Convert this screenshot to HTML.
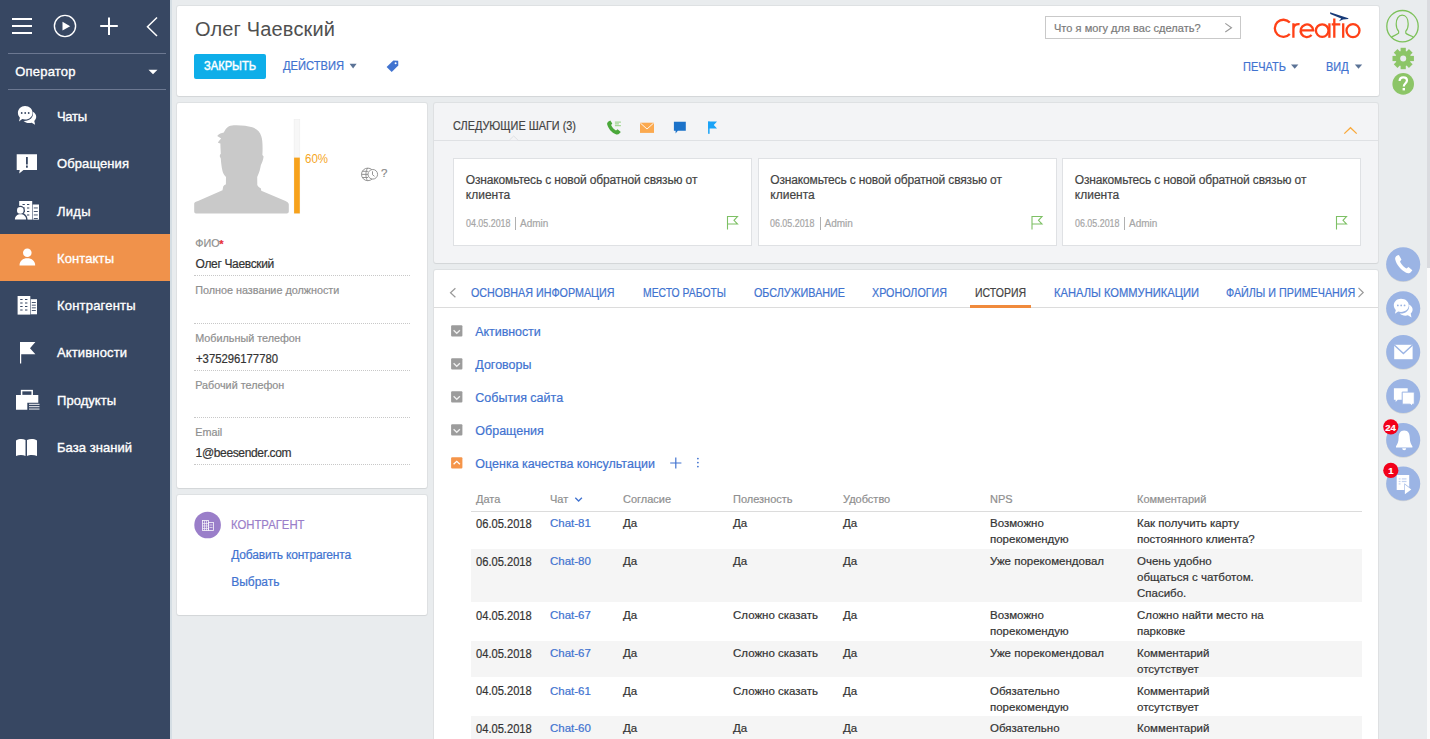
<!DOCTYPE html>
<html><head><meta charset="utf-8"><style>
html,body{margin:0;padding:0;width:1430px;height:739px;overflow:hidden;background:#e9ecee;font-family:"Liberation Sans",sans-serif;}
div{white-space:nowrap;-webkit-text-stroke:0.2px currentColor}
</style></head><body>
<div style="position:absolute;left:0px;top:0px;width:170px;height:739px;background:#374762;"></div><div style="position:absolute;left:170px;top:0px;width:1.5px;height:739px;background:#d5dee4;"></div><div style="position:absolute;left:8px;top:53px;width:158px;height:1px;background:#6c7891;"></div><div style="position:absolute;left:8px;top:89px;width:158px;height:1px;background:#6c7891;"></div><div style="position:absolute;left:0px;top:234px;width:170px;height:47px;background:#f0924b;"></div><div style="position:absolute;left:177px;top:6px;width:1202px;height:90px;background:#fff;box-shadow:0 0 0 1px rgba(0,0,0,0.045), 0 1px 1px rgba(0,0,0,0.05);border-radius:2px"></div><div style="position:absolute;left:177px;top:103px;width:250px;height:385px;background:#fff;box-shadow:0 0 0 1px rgba(0,0,0,0.045), 0 1px 1px rgba(0,0,0,0.05);border-radius:2px"></div><div style="position:absolute;left:177px;top:495px;width:250px;height:120px;background:#fff;box-shadow:0 0 0 1px rgba(0,0,0,0.045), 0 1px 1px rgba(0,0,0,0.05);border-radius:2px"></div><div style="position:absolute;left:434px;top:103px;width:944px;height:160px;background:#f3f4f6;box-shadow:0 0 0 1px rgba(0,0,0,0.045), 0 1px 1px rgba(0,0,0,0.05);border-radius:2px"></div><div style="position:absolute;left:434px;top:270px;width:944px;height:480px;background:#fff;box-shadow:0 0 0 1px rgba(0,0,0,0.045), 0 1px 1px rgba(0,0,0,0.05);border-radius:2px"></div><div style="position:absolute;left:1427px;top:0px;width:3px;height:268px;background:#dadbdf;"></div><div style="position:absolute;left:1427px;top:268px;width:3px;height:471px;background:#fbfbfb;"></div><div style="position:absolute;left:194px;top:54px;width:72px;height:25px;background:#0eaee9;border-radius:2px"></div><div style="position:absolute;left:1044.5px;top:16px;width:196px;height:23px;background:#fff;box-sizing:border-box;border:1px solid #c9c9c9"></div><div style="position:absolute;left:194px;top:275.0px;width:216px;height:0;border-top:1px dotted #c8c8c8"></div><div style="position:absolute;left:194px;top:322.5px;width:216px;height:0;border-top:1px dotted #c8c8c8"></div><div style="position:absolute;left:194px;top:369.7px;width:216px;height:0;border-top:1px dotted #c8c8c8"></div><div style="position:absolute;left:194px;top:416.9px;width:216px;height:0;border-top:1px dotted #c8c8c8"></div><div style="position:absolute;left:194px;top:464.1px;width:216px;height:0;border-top:1px dotted #c8c8c8"></div><div style="position:absolute;left:434px;top:139.5px;width:944px;height:1px;background:#dfe1e4;"></div><div style="position:absolute;left:453px;top:158px;width:299px;height:87.5px;background:#fff;box-sizing:border-box;border:1px solid #dfe1e4"></div><div style="position:absolute;left:515px;top:216.5px;width:1px;height:13.5px;background:#b0b0b0;"></div><div style="position:absolute;left:757.5px;top:158px;width:299px;height:87.5px;background:#fff;box-sizing:border-box;border:1px solid #dfe1e4"></div><div style="position:absolute;left:819.5px;top:216.5px;width:1px;height:13.5px;background:#b0b0b0;"></div><div style="position:absolute;left:1062px;top:158px;width:299px;height:87.5px;background:#fff;box-sizing:border-box;border:1px solid #dfe1e4"></div><div style="position:absolute;left:1124px;top:216.5px;width:1px;height:13.5px;background:#b0b0b0;"></div><div style="position:absolute;left:434px;top:307px;width:944px;height:1px;background:#dcdcdc;"></div><div style="position:absolute;left:969.6px;top:305px;width:61.6px;height:3px;background:#f08a3c;"></div><div style="position:absolute;left:471px;top:510.5px;width:891px;height:1.5px;background:#dcdcdc;"></div><div style="position:absolute;left:471px;top:549.3px;width:891px;height:53.0px;background:#f5f5f5;"></div><div style="position:absolute;left:471px;top:640.5px;width:891px;height:36.700000000000045px;background:#f5f5f5;"></div><div style="position:absolute;left:471px;top:716.2px;width:891px;height:43.799999999999955px;background:#f5f5f5;"></div>
<svg width="1430" height="739" style="position:absolute;left:0;top:0"><rect x="12" y="18" width="20" height="2" fill="#fff"/><rect x="12" y="25" width="20" height="2" fill="#fff"/><rect x="12" y="32" width="20" height="2" fill="#fff"/><circle cx="65" cy="26" r="10.6" fill="none" stroke="#fff" stroke-width="1.4"/><path d="M62.5 21.8 L70.2 26.2 L62.5 30.6 Z" fill="#fff"/><rect x="100.2" y="25" width="17.6" height="2" fill="#fff"/><rect x="108" y="17.5" width="2" height="17.5" fill="#fff"/><path d="M157 17.5 L147.5 26.7 L157 36" fill="none" stroke="#fff" stroke-width="1.5"/><path d="M148.5 69.7 L157.5 69.7 L153 74.3 Z" fill="#fff"/><path d="M25 106 C29.5 106 32.6 109 32.6 112.8 C32.6 116.6 29.5 119.6 25 119.6 C24 119.6 23 119.4 22.2 119.1 L19 121.5 L19.9 117.7 C18.7 116.4 17.9 114.7 17.9 112.8 C17.9 109 21 106 25 106 Z" fill="#fff"/><path d="M32.9 111.8 C35 113 36.2 114.8 36.2 116.8 C36.2 118.4 35.4 119.9 34.3 121 L35.1 124.8 L31.6 122.8 C30.8 123 30 123.1 29.1 123.1 C26.8 123.1 24.9 122.3 23.6 121 C29.5 121.3 34 117.4 32.9 111.8 Z" fill="#fff"/><circle cx="21.7" cy="113" r="0.9" fill="#374762"/><circle cx="25.2" cy="113" r="0.9" fill="#374762"/><circle cx="28.7" cy="113" r="0.9" fill="#374762"/><path d="M16.7 154.2 H37 V170.1 H23.5 L19.2 173.6 L19.7 170.1 H16.7 Z" fill="#fff"/><rect x="26" y="157" width="1.8" height="7.5" fill="#374762"/><rect x="26" y="165.5" width="1.8" height="2.2" fill="#374762"/><rect x="19.2" y="201" width="13" height="18.6" fill="#fff"/><rect x="32.7" y="204.5" width="6.3" height="15.1" fill="#fff"/><rect x="22.5" y="204" width="2.3" height="1" fill="#374762"/><rect x="27" y="204" width="2.3" height="1" fill="#374762"/><rect x="22.5" y="207.5" width="2.3" height="1" fill="#374762"/><rect x="27" y="207.5" width="2.3" height="1" fill="#374762"/><rect x="22.5" y="211" width="2.3" height="1" fill="#374762"/><rect x="27" y="211" width="2.3" height="1" fill="#374762"/><rect x="22.5" y="214.5" width="2.3" height="1" fill="#374762"/><rect x="27" y="214.5" width="2.3" height="1" fill="#374762"/><rect x="33.8" y="207.5" width="4" height="0.9" fill="#374762"/><rect x="33.8" y="211" width="4" height="0.9" fill="#374762"/><rect x="33.8" y="214.5" width="4" height="0.9" fill="#374762"/><rect x="33.8" y="218" width="4" height="0.9" fill="#374762"/><circle cx="20.3" cy="210.4" r="4.6" fill="#374762"/><path d="M13.4 220.5 C13.4 215.3 16.5 212.8 20.5 212.8 C24.5 212.8 27.6 215.3 27.6 220.5 Z" fill="#374762"/><circle cx="20.3" cy="210.4" r="3.3" fill="#fff"/><path d="M14.9 219.6 C14.9 216.2 17.3 214.2 20.5 214.2 C23.7 214.2 26.1 216.2 26.1 219.6 Z" fill="#fff"/><circle cx="27.3" cy="252.8" r="4.3" fill="#fff"/><path d="M19.5 265.4 C19.5 261 22.8 258.3 27.3 258.3 C31.8 258.3 35.2 261 35.2 265.4 Z" fill="#fff"/><rect x="17.6" y="296" width="12.7" height="18.6" fill="#fff"/><rect x="30.8" y="299.2" width="6.2" height="15.1" fill="#fff"/><rect x="20.2" y="299" width="2.4" height="1" fill="#374762"/><rect x="25" y="299" width="2.4" height="1" fill="#374762"/><rect x="20.2" y="302.5" width="2.4" height="1" fill="#374762"/><rect x="25" y="302.5" width="2.4" height="1" fill="#374762"/><rect x="20.2" y="306" width="2.4" height="1" fill="#374762"/><rect x="25" y="306" width="2.4" height="1" fill="#374762"/><rect x="20.2" y="309.5" width="2.4" height="1" fill="#374762"/><rect x="25" y="309.5" width="2.4" height="1" fill="#374762"/><rect x="31.8" y="302" width="4" height="0.9" fill="#374762"/><rect x="31.8" y="304.7" width="4" height="0.9" fill="#374762"/><rect x="31.8" y="307.4" width="4" height="0.9" fill="#374762"/><rect x="31.8" y="310.1" width="4" height="0.9" fill="#374762"/><rect x="20" y="342" width="1.2" height="21.5" fill="#fff"/><path d="M20 342 H35.4 L30 348.3 L35.4 354.3 H20 Z" fill="#fff"/><rect x="21.6" y="390.6" width="10.6" height="5" fill="none" stroke="#fff" stroke-width="1.5"/><path d="M16 395 H38.3 V402.7 H27.3 V409.7 H16 Z" fill="#fff"/><rect x="29" y="403.8" width="10.5" height="1.1" fill="#fff" opacity="0.85"/><rect x="29" y="406.1" width="10.5" height="1.1" fill="#fff" opacity="0.85"/><rect x="29" y="408.5" width="10.5" height="1.1" fill="#fff" opacity="0.85"/><path d="M16 440.5 C19 438.6 23 438.6 25.5 440 V456 C23 454.8 19 454.8 16 456 Z" fill="#fff"/><path d="M37 440.5 C34 438.6 30 438.6 27 440 V456 C29.5 454.8 34 454.8 37 456 Z" fill="#fff"/><path d="M349.6 63.8 H356.6 L353.1 68.5 Z" fill="#5b7396"/><path d="M1291 64.4 H1298.4 L1294.7 68.7 Z" fill="#5b7396"/><path d="M1354.8 64.4 H1362.2 L1358.5 68.7 Z" fill="#5b7396"/><path d="M386.6 67 L393.3 60.6 L398.2 60.8 L398.3 65.6 L391.7 72 Z" fill="#4173d0"/><circle cx="395.6" cy="63.3" r="1" fill="#fff"/><path d="M1225.3 23.4 L1231.5 27.7 L1225.3 32" fill="none" stroke="#999" stroke-width="1.1"/><g fill="none" stroke="#ff4117" stroke-width="2.3"><path d="M1289.8 22.6 A8.6 8.6 0 1 0 1289.8 34.1"/><path d="M1293.4 23.3 V37.8 M1293.4 29 C1293.6 25 1296 23.8 1299.6 24.1"/><path d="M1300.8 30.4 H1313.2 A6.3 6.3 0 1 0 1311.6 35"/><circle cx="1322.2" cy="30.6" r="6.3"/><path d="M1329.4 23.3 V37.8"/><path d="M1334.3 18.5 V37.8 M1331.7 24.4 H1340.3"/><path d="M1343.2 23.3 V37.8"/><circle cx="1353" cy="30.6" r="6.5"/></g><path d="M1330 12.2 L1348.4 18.2 L1348.2 19 L1343 19.4 L1339 21.3 L1341.2 18.6 L1330.3 13.9 Z" fill="#163a78"/><circle cx="1402.5" cy="26.2" r="15.7" fill="none" stroke="#7dc15a" stroke-width="1.3"/><path d="M1391.5 37 C1393.5 35.5 1397.5 34.8 1398.6 33.2 V31.2 C1397 29.6 1396.2 27.2 1396.2 24 C1396.2 18.6 1398.6 15.2 1402.2 15.2 C1405.8 15.2 1408.2 18.6 1408.2 24 C1408.2 27.2 1407.4 29.6 1405.8 31.2 V33.2 C1406.9 34.8 1411 35.5 1413.2 37" fill="none" stroke="#7dc15a" stroke-width="1.2"/><g fill="#8cc567"><circle cx="1403.2" cy="58.5" r="7.8"/><rect x="1400.6000000000001" y="47.8" width="5.2" height="5" transform="rotate(0 1403.2 58.5)"/><rect x="1400.6000000000001" y="47.8" width="5.2" height="5" transform="rotate(45 1403.2 58.5)"/><rect x="1400.6000000000001" y="47.8" width="5.2" height="5" transform="rotate(90 1403.2 58.5)"/><rect x="1400.6000000000001" y="47.8" width="5.2" height="5" transform="rotate(135 1403.2 58.5)"/><rect x="1400.6000000000001" y="47.8" width="5.2" height="5" transform="rotate(180 1403.2 58.5)"/><rect x="1400.6000000000001" y="47.8" width="5.2" height="5" transform="rotate(225 1403.2 58.5)"/><rect x="1400.6000000000001" y="47.8" width="5.2" height="5" transform="rotate(270 1403.2 58.5)"/><rect x="1400.6000000000001" y="47.8" width="5.2" height="5" transform="rotate(315 1403.2 58.5)"/></g><circle cx="1403.2" cy="58.5" r="3" fill="#e9ecee"/><circle cx="1403.2" cy="83.9" r="10.8" fill="#8cc567"/><path d="M1399.6 81 C1399.6 78.6 1401.2 77.3 1403.3 77.3 C1405.4 77.3 1407 78.6 1407 80.6 C1407 83.2 1403.8 83.4 1403.8 86.5" fill="none" stroke="#fff" stroke-width="2.2"/><rect x="1402.6" y="88" width="2.4" height="2.4" fill="#fff"/><circle cx="1403.2" cy="265.0" r="17" fill="#000" opacity="0.10"/><circle cx="1403.2" cy="264.3" r="17" fill="#9bb4e4"/><circle cx="1403.2" cy="308.9" r="17" fill="#000" opacity="0.10"/><circle cx="1403.2" cy="308.2" r="17" fill="#9bb4e4"/><circle cx="1403.2" cy="352.7" r="17" fill="#000" opacity="0.10"/><circle cx="1403.2" cy="352" r="17" fill="#9bb4e4"/><circle cx="1403.2" cy="396.7" r="17" fill="#000" opacity="0.10"/><circle cx="1403.2" cy="396" r="17" fill="#9bb4e4"/><circle cx="1403.2" cy="440.7" r="17" fill="#000" opacity="0.10"/><circle cx="1403.2" cy="440" r="17" fill="#9bb4e4"/><circle cx="1403.2" cy="484.2" r="17" fill="#000" opacity="0.10"/><circle cx="1403.2" cy="483.5" r="17" fill="#9bb4e4"/><path d="M1397.3 256.5 C1396 257.2 1395.3 258.4 1395.7 260 C1396.8 264.5 1400.5 269 1405 271.2 C1406.6 272 1408.2 271.6 1409.3 270.3 L1410.3 269 L1407 266.3 L1405.4 267.6 C1403.2 266.6 1400.6 263.6 1399.8 261.5 L1401 259.9 L1398.8 256 Z" fill="#fff" transform="translate(1403.2 264.3) scale(1.17) translate(-1402.5 -264)"/><g transform="translate(1403.2 308.2) scale(1.12) translate(-1403 -308)"><path d="M1401 299.5 C1405.2 299.5 1408 302.1 1408 305.4 C1408 308.7 1405.2 311.3 1401 311.3 C1400.1 311.3 1399.3 311.1 1398.5 310.9 L1395.6 313 L1396.4 309.6 C1395.3 308.5 1394.6 307 1394.6 305.4 C1394.6 302.1 1397.3 299.5 1401 299.5 Z" fill="#fff"/><path d="M1408.2 304.6 C1410.2 305.7 1411.4 307.3 1411.4 309.1 C1411.4 310.5 1410.7 311.8 1409.7 312.8 L1410.4 316.3 L1407.2 314.4 C1406.5 314.6 1405.8 314.7 1405 314.7 C1402.9 314.7 1401.2 314 1400 312.8 C1405.5 313 1409.2 309.5 1408.2 304.6 Z" fill="#fff"/><circle cx="1398.2" cy="305.5" r="0.8" fill="#9bb4e4"/><circle cx="1401.2" cy="305.5" r="0.8" fill="#9bb4e4"/><circle cx="1404.2" cy="305.5" r="0.8" fill="#9bb4e4"/></g><rect x="1394.2" y="344.8" width="18.4" height="14.4" fill="#fff"/><path d="M1394.2 345 L1403.4 353.6 L1412.6 345" fill="none" stroke="#9bb4e4" stroke-width="1.4"/><path d="M1393.9 388.2 H1407.7 V399.7 H1397.8 L1395.6 402 V399.7 H1393.9 Z" fill="#fff"/><path d="M1402.2 392.1 H1414.3 V404.2 H1412.4 V406.4 L1410.3 404.2 H1402.2 Z" fill="#fff" stroke="#9bb4e4" stroke-width="1"/><path d="M1404.2 430.5 C1400 430.5 1398.6 434 1398.6 438 C1398.6 442 1397.2 444.5 1396 446.3 V447.4 H1412.4 V446.3 C1411.2 444.5 1409.8 442 1409.8 438 C1409.8 434 1408.4 430.5 1404.2 430.5 Z" fill="#fff"/><path d="M1402.2 448.3 A2 2 0 0 0 1406.2 448.3 Z" fill="#fff"/><rect x="1396.7" y="475" width="12.5" height="15" fill="#fff"/><rect x="1398.7" y="478.29999999999995" width="1.8" height="1.2" fill="#9bb4e4" opacity="0.6"/><rect x="1401.8" y="478.29999999999995" width="4.7" height="1.2" fill="#9bb4e4" opacity="0.6"/><rect x="1398.7" y="480.9" width="1.8" height="1.2" fill="#9bb4e4" opacity="0.6"/><rect x="1401.8" y="480.9" width="4.7" height="1.2" fill="#9bb4e4" opacity="0.6"/><rect x="1398.7" y="483.29999999999995" width="1.8" height="1.2" fill="#9bb4e4" opacity="0.6"/><path d="M1404.3 483.3 L1412.4 489.4 L1404.3 495.5 Z" fill="#9bb4e4"/><path d="M1404.9 484.6 L1411.3 489.4 L1404.9 494.3 Z" fill="#fff"/><circle cx="1390.8" cy="426.8" r="7.6" fill="#f2001a"/><circle cx="1390.8" cy="470.4" r="7.6" fill="#f2001a"/><path d="M233.7 125.3 C241 125 247 125.8 252.3 127.3 C257 129 260 132 261.2 136 C262.6 140 262.8 146 262.4 155 L263.6 156.5 C263.2 160 262 163 260.9 165 C260.2 169 259.5 172 257.2 177 L257.3 185 C257.8 186.6 259.6 187.5 260.8 188.2 L261.3 190.8 L285.5 200.9 C287.5 201.8 288.8 203 288.8 204.6 V211.5 C288.8 212.7 287.9 213.5 286.8 213.5 H196 C195 213.5 194.2 212.7 194.2 211.5 V203.5 C194.2 202.2 196 201.4 198 200.9 L222.5 190.3 L223.2 186.4 C224 185.3 225 184.8 225.9 184.3 L226 177 C224 175 223 173 222.5 171 C221.6 167 221 162 220.8 158.4 L219.8 156.6 C219.8 155 220.2 154.2 220.8 153.8 C220.6 149 220.4 146 220.4 143.4 L217.9 142.8 C218.8 141 219.8 139.8 221.2 138.6 C220 137.6 218.6 136.6 217.2 135.9 C219 134 221.4 133 223.8 132.6 C224.8 130.2 226 128.4 227.6 127.2 C229.4 126 231.5 125.4 233.7 125.3 Z" fill="#c9c9c9"/><rect x="294.1" y="119.4" width="5.7" height="94" fill="#f7f7f7" stroke="#eeeeee" stroke-width="0.6"/><rect x="294.1" y="157.6" width="5.7" height="55.8" fill="#f7a21c"/><g fill="none" stroke="#8a8a8a" stroke-width="0.9"><circle cx="367.8" cy="174.4" r="6.3"/><path d="M367.8 168.1 C365.3 170 365.3 179 367.8 180.7 M361.5 174.4 H369 M362.3 171.3 H368 M362.3 177.5 H368"/><circle cx="372.8" cy="174.3" r="4.8" fill="#fff"/><path d="M372.5 171.3 V174.7 L374.5 176.3"/></g><circle cx="207.6" cy="525" r="13.3" fill="#9a7ec9"/><g fill="none" stroke="#fff" stroke-width="0.8" opacity="0.95"><rect x="202.5" y="520.5" width="6" height="10"/><rect x="208.5" y="522.5" width="5" height="8"/><path d="M204.5 520.5 V530.5 M206.5 520.5 V530.5 M202.5 523.5 H208.5 M202.5 526 H208.5 M202.5 528.5 H208.5 M209.5 525 H212.5 M209.5 527.5 H212.5" opacity="0.8"/></g><path d="M609 121.2 C607.6 121.9 606.8 123.1 607.2 124.6 C608.3 128.9 611.8 132.8 615.8 134.3 C617.2 134.8 618.6 134.4 619.6 133.3 L620.8 132 L617.6 129.2 L616 130.4 C614.2 129.5 611.8 126.9 611.1 124.9 L612.3 123.4 L610.3 120.4 Z" fill="#4aa83a"/><g fill="#8fd07c"><rect x="614.9" y="121.6" width="6" height="1"/><rect x="614.9" y="123.4" width="4" height="1"/><rect x="614.9" y="125.2" width="6" height="1"/></g><rect x="640" y="122.7" width="14" height="10.2" fill="#fba94f"/><path d="M640.3 123 L647 129 L653.7 123" fill="none" stroke="#fff" stroke-width="0.9"/><path d="M673.9 121.8 H685.8 V130.7 H677.8 L675.6 133.4 V130.7 H673.9 Z" fill="#1b72c9"/><rect x="708.1" y="121.6" width="1.5" height="12.2" fill="#1aa3f7"/><path d="M708.1 121.6 H717 L713.8 125 L717 128.5 H708.1 Z" fill="#1aa3f7"/><path d="M1344.3 133.6 L1350.5 127.7 L1356.7 133.6" fill="none" stroke="#f9a93b" stroke-width="1.3"/><path d="M509.5 140.3 L513.7 136.2 L517.9 140.3 Z" fill="#f3f4f6"/><path d="M509.5 140 L513.7 136 L517.9 140" fill="none" stroke="#dfe1e4" stroke-width="1"/><path d="M727.5 229.4 V216.5 H737.5 L734 220.3 L737.5 224 H727.5" fill="none" stroke="#7dc064" stroke-width="1.1"/><path d="M1032.0 229.4 V216.5 H1042.0 L1038.5 220.3 L1042.0 224 H1032.0" fill="none" stroke="#7dc064" stroke-width="1.1"/><path d="M1336.5 229.4 V216.5 H1346.5 L1343 220.3 L1346.5 224 H1336.5" fill="none" stroke="#7dc064" stroke-width="1.1"/><path d="M455.4 288.3 L450.5 292.8 L455.4 297.3" fill="none" stroke="#999" stroke-width="1.2"/><path d="M1358.5 287.8 L1363.2 292.5 L1358.5 297.2" fill="none" stroke="#999" stroke-width="1.2"/><rect x="451.1" y="325.3" width="11.3" height="11.3" rx="1" fill="#9c9c9c"/><path d="M453.6 330.3 L456.75 333.3 L459.9 330.3" fill="none" stroke="#f0f0f0" stroke-width="1.3"/><rect x="451.1" y="358.3" width="11.3" height="11.3" rx="1" fill="#9c9c9c"/><path d="M453.6 363.3 L456.75 366.3 L459.9 363.3" fill="none" stroke="#f0f0f0" stroke-width="1.3"/><rect x="451.1" y="391.3" width="11.3" height="11.3" rx="1" fill="#9c9c9c"/><path d="M453.6 396.3 L456.75 399.3 L459.9 396.3" fill="none" stroke="#f0f0f0" stroke-width="1.3"/><rect x="451.1" y="424.3" width="11.3" height="11.3" rx="1" fill="#9c9c9c"/><path d="M453.6 429.3 L456.75 432.3 L459.9 429.3" fill="none" stroke="#f0f0f0" stroke-width="1.3"/><rect x="451.1" y="457.3" width="11.3" height="11.3" rx="1" fill="#f5954a"/><path d="M453.6 464.3 L456.75 461.3 L459.9 464.3" fill="none" stroke="#fff" stroke-width="1.3"/><path d="M670.2 463 H681.4 M675.8 457.4 V468.6" stroke="#4173d0" stroke-width="1.2"/><g fill="#4173d0"><circle cx="697.9" cy="458.6" r="0.9"/><circle cx="697.9" cy="462.6" r="0.9"/><circle cx="697.9" cy="466.6" r="0.9"/></g><path d="M575.3 497.8 L578.6 501 L581.9 497.8" fill="none" stroke="#4173d0" stroke-width="1.3"/></svg>
<div id="t0" style="position:absolute;left:15.2px;top:64.00px;font-size:13px;line-height:15.60px;font-weight:400;color:#fff;letter-spacing:0.210px;-webkit-text-stroke:0.35px #fff">Оператор</div><div id="t1" style="position:absolute;left:57.0px;top:109.10px;font-size:13px;line-height:15.60px;font-weight:400;color:#fff;letter-spacing:-0.307px;-webkit-text-stroke:0.35px #fff">Чаты</div><div id="t2" style="position:absolute;left:57.0px;top:156.35px;font-size:13px;line-height:15.60px;font-weight:400;color:#fff;letter-spacing:0.090px;-webkit-text-stroke:0.35px #fff">Обращения</div><div id="t3" style="position:absolute;left:57.0px;top:203.60px;font-size:13px;line-height:15.60px;font-weight:400;color:#fff;letter-spacing:0.255px;-webkit-text-stroke:0.35px #fff">Лиды</div><div id="t4" style="position:absolute;left:57.0px;top:250.85px;font-size:13px;line-height:15.60px;font-weight:400;color:#fff;letter-spacing:0.121px;-webkit-text-stroke:0.35px #fff">Контакты</div><div id="t5" style="position:absolute;left:57.0px;top:298.10px;font-size:13px;line-height:15.60px;font-weight:400;color:#fff;letter-spacing:0.194px;-webkit-text-stroke:0.35px #fff">Контрагенты</div><div id="t6" style="position:absolute;left:57.0px;top:345.35px;font-size:13px;line-height:15.60px;font-weight:400;color:#fff;letter-spacing:0.137px;-webkit-text-stroke:0.35px #fff">Активности</div><div id="t7" style="position:absolute;left:57.0px;top:392.60px;font-size:13px;line-height:15.60px;font-weight:400;color:#fff;letter-spacing:0.036px;-webkit-text-stroke:0.35px #fff">Продукты</div><div id="t8" style="position:absolute;left:57.0px;top:439.85px;font-size:13px;line-height:15.60px;font-weight:400;color:#fff;letter-spacing:0.050px;-webkit-text-stroke:0.35px #fff">База знаний</div><div id="t9" style="position:absolute;left:195.0px;top:16.97px;font-size:20px;line-height:24.00px;font-weight:400;color:#505050;letter-spacing:0.163px;-webkit-text-stroke:0">Олег Чаевский</div><div id="t10" style="position:absolute;left:204.2px;top:59.14px;font-size:12px;line-height:14.40px;font-weight:400;color:#fff;transform:scaleX(0.9273);transform-origin:0 0;-webkit-text-stroke:0.45px #fff">ЗАКРЫТЬ</div><div id="t11" style="position:absolute;left:283.2px;top:59.14px;font-size:12px;line-height:14.40px;font-weight:400;color:#4173d0;transform:scaleX(0.9291);transform-origin:0 0;">ДЕЙСТВИЯ</div><div id="t12" style="position:absolute;left:1242.6px;top:59.54px;font-size:12px;line-height:14.40px;font-weight:400;color:#4173d0;transform:scaleX(0.9167);transform-origin:0 0;">ПЕЧАТЬ</div><div id="t13" style="position:absolute;left:1326.2px;top:59.54px;font-size:12px;line-height:14.40px;font-weight:400;color:#4173d0;transform:scaleX(0.9126);transform-origin:0 0;">ВИД</div><div id="t14" style="position:absolute;left:1054.0px;top:22.39px;font-size:11px;line-height:13.20px;font-weight:400;color:#7a7a7a;letter-spacing:0.035px;">Что я могу для вас сделать?</div><div id="t15" style="position:absolute;left:304.7px;top:151.94px;font-size:12px;line-height:14.40px;font-weight:400;color:#f5a623;transform:scaleX(0.9571);transform-origin:0 0;-webkit-text-stroke:0">60%</div><div id="t16" style="position:absolute;left:195.2px;top:236.98px;font-size:10.8px;line-height:12.96px;font-weight:400;color:#8f8f8f;">ФИО</div><div id="t17" style="position:absolute;left:195.6px;top:256.84px;font-size:12px;line-height:14.40px;font-weight:400;color:#333;letter-spacing:-0.344px;">Олег Чаевский</div><div id="t18" style="position:absolute;left:195.2px;top:284.48px;font-size:10.8px;line-height:12.96px;font-weight:400;color:#8f8f8f;">Полное название должности</div><div id="t19" style="position:absolute;left:195.2px;top:331.68px;font-size:10.8px;line-height:12.96px;font-weight:400;color:#8f8f8f;">Мобильный телефон</div><div id="t20" style="position:absolute;left:195.6px;top:351.54px;font-size:12px;line-height:14.40px;font-weight:400;color:#333;transform:scaleX(0.9415);transform-origin:0 0;">+375296177780</div><div id="t21" style="position:absolute;left:195.2px;top:378.88px;font-size:10.8px;line-height:12.96px;font-weight:400;color:#8f8f8f;">Рабочий телефон</div><div id="t22" style="position:absolute;left:195.2px;top:426.08px;font-size:10.8px;line-height:12.96px;font-weight:400;color:#8f8f8f;">Email</div><div id="t23" style="position:absolute;left:195.6px;top:445.94px;font-size:12px;line-height:14.40px;font-weight:400;color:#333;letter-spacing:-0.352px;">1@beesender.com</div><div id="t24" style="position:absolute;left:231.2px;top:517.87px;font-size:12.5px;line-height:15.00px;font-weight:400;color:#9a7ec9;transform:scaleX(0.9058);transform-origin:0 0;">КОНТРАГЕНТ</div><div id="t25" style="position:absolute;left:231.2px;top:547.74px;font-size:12px;line-height:14.40px;font-weight:400;color:#4173d0;letter-spacing:-0.177px;">Добавить контрагента</div><div id="t26" style="position:absolute;left:231.2px;top:574.64px;font-size:12px;line-height:14.40px;font-weight:400;color:#4173d0;">Выбрать</div><div id="t27" style="position:absolute;left:452.5px;top:118.94px;font-size:12px;line-height:14.40px;font-weight:400;color:#444;transform:scaleX(0.9077);transform-origin:0 0;">СЛЕДУЮЩИЕ ШАГИ (3)</div><div id="t28" style="position:absolute;left:465.8px;top:172.74px;font-size:12px;line-height:14.40px;font-weight:400;color:#444;letter-spacing:-0.147px;">Ознакомьтесь с новой обратной связью от</div><div id="t29" style="position:absolute;left:465.8px;top:188.34px;font-size:12px;line-height:14.40px;font-weight:400;color:#444;">клиента</div><div id="t30" style="position:absolute;left:465.8px;top:218.23px;font-size:10px;line-height:12.00px;font-weight:400;color:#a6a6a6;transform:scaleX(0.8889);transform-origin:0 0;">04.05.2018</div><div id="t31" style="position:absolute;left:520.0px;top:218.23px;font-size:10px;line-height:12.00px;font-weight:400;color:#a6a6a6;">Admin</div><div id="t32" style="position:absolute;left:770.3px;top:172.74px;font-size:12px;line-height:14.40px;font-weight:400;color:#444;letter-spacing:-0.147px;">Ознакомьтесь с новой обратной связью от</div><div id="t33" style="position:absolute;left:770.3px;top:188.34px;font-size:12px;line-height:14.40px;font-weight:400;color:#444;">клиента</div><div id="t34" style="position:absolute;left:770.3px;top:218.23px;font-size:10px;line-height:12.00px;font-weight:400;color:#a6a6a6;transform:scaleX(0.8889);transform-origin:0 0;">06.05.2018</div><div id="t35" style="position:absolute;left:824.5px;top:218.23px;font-size:10px;line-height:12.00px;font-weight:400;color:#a6a6a6;">Admin</div><div id="t36" style="position:absolute;left:1074.8px;top:172.74px;font-size:12px;line-height:14.40px;font-weight:400;color:#444;letter-spacing:-0.147px;">Ознакомьтесь с новой обратной связью от</div><div id="t37" style="position:absolute;left:1074.8px;top:188.34px;font-size:12px;line-height:14.40px;font-weight:400;color:#444;">клиента</div><div id="t38" style="position:absolute;left:1074.8px;top:218.23px;font-size:10px;line-height:12.00px;font-weight:400;color:#a6a6a6;transform:scaleX(0.8889);transform-origin:0 0;">06.05.2018</div><div id="t39" style="position:absolute;left:1129.0px;top:218.23px;font-size:10px;line-height:12.00px;font-weight:400;color:#a6a6a6;">Admin</div><div id="t40" style="position:absolute;left:471.3px;top:285.64px;font-size:12px;line-height:14.40px;font-weight:400;color:#4173d0;transform:scaleX(0.8943);transform-origin:0 0;">ОСНОВНАЯ ИНФОРМАЦИЯ</div><div id="t41" style="position:absolute;left:643.2px;top:285.64px;font-size:12px;line-height:14.40px;font-weight:400;color:#4173d0;transform:scaleX(0.8649);transform-origin:0 0;">МЕСТО РАБОТЫ</div><div id="t42" style="position:absolute;left:754.0px;top:285.64px;font-size:12px;line-height:14.40px;font-weight:400;color:#4173d0;transform:scaleX(0.8970);transform-origin:0 0;">ОБСЛУЖИВАНИЕ</div><div id="t43" style="position:absolute;left:872.0px;top:285.64px;font-size:12px;line-height:14.40px;font-weight:400;color:#4173d0;transform:scaleX(0.8934);transform-origin:0 0;">ХРОНОЛОГИЯ</div><div id="t44" style="position:absolute;left:975.0px;top:285.64px;font-size:12px;line-height:14.40px;font-weight:400;color:#444;transform:scaleX(0.8746);transform-origin:0 0;">ИСТОРИЯ</div><div id="t45" style="position:absolute;left:1054.0px;top:285.64px;font-size:12px;line-height:14.40px;font-weight:400;color:#4173d0;transform:scaleX(0.9296);transform-origin:0 0;">КАНАЛЫ КОММУНИКАЦИИ</div><div id="t46" style="position:absolute;left:1226.0px;top:285.64px;font-size:12px;line-height:14.40px;font-weight:400;color:#4173d0;overflow:hidden;width:144px;transform:scaleX(0.895);transform-origin:0 0">ФАЙЛЫ И ПРИМЕЧАНИЯ</div><div id="t47" style="position:absolute;left:475.3px;top:324.67px;font-size:12.5px;line-height:15.00px;font-weight:400;color:#4173d0;letter-spacing:-0.079px;">Активности</div><div id="t48" style="position:absolute;left:475.3px;top:357.67px;font-size:12.5px;line-height:15.00px;font-weight:400;color:#4173d0;">Договоры</div><div id="t49" style="position:absolute;left:475.3px;top:390.67px;font-size:12.5px;line-height:15.00px;font-weight:400;color:#4173d0;">События сайта</div><div id="t50" style="position:absolute;left:475.3px;top:423.67px;font-size:12.5px;line-height:15.00px;font-weight:400;color:#4173d0;">Обращения</div><div id="t51" style="position:absolute;left:475.3px;top:456.67px;font-size:12.5px;line-height:15.00px;font-weight:400;color:#4173d0;letter-spacing:-0.001px;">Оценка качества консультации</div><div id="t52" style="position:absolute;left:476.0px;top:493.19px;font-size:11px;line-height:13.20px;font-weight:400;color:#8f8f8f;">Дата</div><div id="t53" style="position:absolute;left:550.0px;top:493.19px;font-size:11px;line-height:13.20px;font-weight:400;color:#8f8f8f;">Чат</div><div id="t54" style="position:absolute;left:623.0px;top:493.19px;font-size:11px;line-height:13.20px;font-weight:400;color:#8f8f8f;">Согласие</div><div id="t55" style="position:absolute;left:733.0px;top:493.19px;font-size:11px;line-height:13.20px;font-weight:400;color:#8f8f8f;">Полезность</div><div id="t56" style="position:absolute;left:843.0px;top:493.19px;font-size:11px;line-height:13.20px;font-weight:400;color:#8f8f8f;">Удобство</div><div id="t57" style="position:absolute;left:990.0px;top:493.19px;font-size:11px;line-height:13.20px;font-weight:400;color:#8f8f8f;">NPS</div><div id="t58" style="position:absolute;left:1137.0px;top:493.19px;font-size:11px;line-height:13.20px;font-weight:400;color:#8f8f8f;">Комментарий</div><div id="t59" style="position:absolute;left:476.0px;top:516.94px;font-size:12px;line-height:14.40px;font-weight:400;color:#333;transform:scaleX(0.9274);transform-origin:0 0;">06.05.2018</div><div id="t60" style="position:absolute;left:550.0px;top:517.42px;font-size:11.5px;line-height:13.80px;font-weight:400;color:#4173d0;">Chat-81</div><div id="t61" style="position:absolute;left:623.0px;top:517.42px;font-size:11.5px;line-height:13.80px;font-weight:400;color:#333;">Да</div><div id="t62" style="position:absolute;left:733.0px;top:517.42px;font-size:11.5px;line-height:13.80px;font-weight:400;color:#333;">Да</div><div id="t63" style="position:absolute;left:843.0px;top:517.42px;font-size:11.5px;line-height:13.80px;font-weight:400;color:#333;">Да</div><div id="t64" style="position:absolute;left:990.0px;top:517.42px;font-size:11.5px;line-height:13.80px;font-weight:400;color:#333;">Возможно</div><div id="t65" style="position:absolute;left:990.0px;top:533.42px;font-size:11.5px;line-height:13.80px;font-weight:400;color:#333;">порекомендую</div><div id="t66" style="position:absolute;left:1137.0px;top:517.42px;font-size:11.5px;line-height:13.80px;font-weight:400;color:#333;">Как получить карту</div><div id="t67" style="position:absolute;left:1137.0px;top:533.42px;font-size:11.5px;line-height:13.80px;font-weight:400;color:#333;">постоянного клиента?</div><div id="t68" style="position:absolute;left:476.0px;top:554.64px;font-size:12px;line-height:14.40px;font-weight:400;color:#333;transform:scaleX(0.9274);transform-origin:0 0;">06.05.2018</div><div id="t69" style="position:absolute;left:550.0px;top:555.12px;font-size:11.5px;line-height:13.80px;font-weight:400;color:#4173d0;">Chat-80</div><div id="t70" style="position:absolute;left:623.0px;top:555.12px;font-size:11.5px;line-height:13.80px;font-weight:400;color:#333;">Да</div><div id="t71" style="position:absolute;left:733.0px;top:555.12px;font-size:11.5px;line-height:13.80px;font-weight:400;color:#333;">Да</div><div id="t72" style="position:absolute;left:843.0px;top:555.12px;font-size:11.5px;line-height:13.80px;font-weight:400;color:#333;">Да</div><div id="t73" style="position:absolute;left:990.0px;top:555.12px;font-size:11.5px;line-height:13.80px;font-weight:400;color:#333;">Уже порекомендовал</div><div id="t74" style="position:absolute;left:1137.0px;top:555.12px;font-size:11.5px;line-height:13.80px;font-weight:400;color:#333;">Очень удобно</div><div id="t75" style="position:absolute;left:1137.0px;top:571.12px;font-size:11.5px;line-height:13.80px;font-weight:400;color:#333;">общаться с чатботом.</div><div id="t76" style="position:absolute;left:1137.0px;top:587.12px;font-size:11.5px;line-height:13.80px;font-weight:400;color:#333;">Спасибо.</div><div id="t77" style="position:absolute;left:476.0px;top:608.94px;font-size:12px;line-height:14.40px;font-weight:400;color:#333;transform:scaleX(0.9274);transform-origin:0 0;">04.05.2018</div><div id="t78" style="position:absolute;left:550.0px;top:609.42px;font-size:11.5px;line-height:13.80px;font-weight:400;color:#4173d0;">Chat-67</div><div id="t79" style="position:absolute;left:623.0px;top:609.42px;font-size:11.5px;line-height:13.80px;font-weight:400;color:#333;">Да</div><div id="t80" style="position:absolute;left:733.0px;top:609.42px;font-size:11.5px;line-height:13.80px;font-weight:400;color:#333;">Сложно сказать</div><div id="t81" style="position:absolute;left:843.0px;top:609.42px;font-size:11.5px;line-height:13.80px;font-weight:400;color:#333;">Да</div><div id="t82" style="position:absolute;left:990.0px;top:609.42px;font-size:11.5px;line-height:13.80px;font-weight:400;color:#333;">Возможно</div><div id="t83" style="position:absolute;left:990.0px;top:625.42px;font-size:11.5px;line-height:13.80px;font-weight:400;color:#333;">порекомендую</div><div id="t84" style="position:absolute;left:1137.0px;top:609.42px;font-size:11.5px;line-height:13.80px;font-weight:400;color:#333;">Сложно найти место на</div><div id="t85" style="position:absolute;left:1137.0px;top:625.42px;font-size:11.5px;line-height:13.80px;font-weight:400;color:#333;">парковке</div><div id="t86" style="position:absolute;left:476.0px;top:646.54px;font-size:12px;line-height:14.40px;font-weight:400;color:#333;transform:scaleX(0.9274);transform-origin:0 0;">04.05.2018</div><div id="t87" style="position:absolute;left:550.0px;top:647.02px;font-size:11.5px;line-height:13.80px;font-weight:400;color:#4173d0;">Chat-67</div><div id="t88" style="position:absolute;left:623.0px;top:647.02px;font-size:11.5px;line-height:13.80px;font-weight:400;color:#333;">Да</div><div id="t89" style="position:absolute;left:733.0px;top:647.02px;font-size:11.5px;line-height:13.80px;font-weight:400;color:#333;">Сложно сказать</div><div id="t90" style="position:absolute;left:843.0px;top:647.02px;font-size:11.5px;line-height:13.80px;font-weight:400;color:#333;">Да</div><div id="t91" style="position:absolute;left:990.0px;top:647.02px;font-size:11.5px;line-height:13.80px;font-weight:400;color:#333;">Уже порекомендовал</div><div id="t92" style="position:absolute;left:1137.0px;top:647.02px;font-size:11.5px;line-height:13.80px;font-weight:400;color:#333;">Комментарий</div><div id="t93" style="position:absolute;left:1137.0px;top:663.02px;font-size:11.5px;line-height:13.80px;font-weight:400;color:#333;">отсутствует</div><div id="t94" style="position:absolute;left:476.0px;top:684.24px;font-size:12px;line-height:14.40px;font-weight:400;color:#333;transform:scaleX(0.9274);transform-origin:0 0;">04.05.2018</div><div id="t95" style="position:absolute;left:550.0px;top:684.72px;font-size:11.5px;line-height:13.80px;font-weight:400;color:#4173d0;">Chat-61</div><div id="t96" style="position:absolute;left:623.0px;top:684.72px;font-size:11.5px;line-height:13.80px;font-weight:400;color:#333;">Да</div><div id="t97" style="position:absolute;left:733.0px;top:684.72px;font-size:11.5px;line-height:13.80px;font-weight:400;color:#333;">Сложно сказать</div><div id="t98" style="position:absolute;left:843.0px;top:684.72px;font-size:11.5px;line-height:13.80px;font-weight:400;color:#333;">Да</div><div id="t99" style="position:absolute;left:990.0px;top:684.72px;font-size:11.5px;line-height:13.80px;font-weight:400;color:#333;">Обязательно</div><div id="t100" style="position:absolute;left:990.0px;top:700.72px;font-size:11.5px;line-height:13.80px;font-weight:400;color:#333;">порекомендую</div><div id="t101" style="position:absolute;left:1137.0px;top:684.72px;font-size:11.5px;line-height:13.80px;font-weight:400;color:#333;">Комментарий</div><div id="t102" style="position:absolute;left:1137.0px;top:700.72px;font-size:11.5px;line-height:13.80px;font-weight:400;color:#333;">отсутствует</div><div id="t103" style="position:absolute;left:476.0px;top:721.94px;font-size:12px;line-height:14.40px;font-weight:400;color:#333;transform:scaleX(0.9274);transform-origin:0 0;">04.05.2018</div><div id="t104" style="position:absolute;left:550.0px;top:722.42px;font-size:11.5px;line-height:13.80px;font-weight:400;color:#4173d0;">Chat-60</div><div id="t105" style="position:absolute;left:623.0px;top:722.42px;font-size:11.5px;line-height:13.80px;font-weight:400;color:#333;">Да</div><div id="t106" style="position:absolute;left:733.0px;top:722.42px;font-size:11.5px;line-height:13.80px;font-weight:400;color:#333;">Да</div><div id="t107" style="position:absolute;left:843.0px;top:722.42px;font-size:11.5px;line-height:13.80px;font-weight:400;color:#333;">Да</div><div id="t108" style="position:absolute;left:990.0px;top:722.42px;font-size:11.5px;line-height:13.80px;font-weight:400;color:#333;">Обязательно</div><div id="t109" style="position:absolute;left:990.0px;top:738.42px;font-size:11.5px;line-height:13.80px;font-weight:400;color:#333;">порекомендую</div><div id="t110" style="position:absolute;left:1137.0px;top:722.42px;font-size:11.5px;line-height:13.80px;font-weight:400;color:#333;">Комментарий</div><div id="t111" style="position:absolute;left:1137.0px;top:738.42px;font-size:11.5px;line-height:13.80px;font-weight:400;color:#333;">отсутствует</div><div id="t112" style="position:absolute;left:1385.3px;top:421.71px;font-size:9.5px;line-height:11.40px;font-weight:700;color:#fff;">24</div><div id="t113" style="position:absolute;left:219.3px;top:237.59px;font-size:11px;line-height:13.20px;font-weight:700;color:#e8303a;">*</div><div id="t114" style="position:absolute;left:1388.2px;top:465.41px;font-size:9.5px;line-height:11.40px;font-weight:700;color:#fff;">1</div><div id="t115" style="position:absolute;left:381.0px;top:167.42px;font-size:11.5px;line-height:13.80px;font-weight:400;color:#888;">?</div>
</body></html>
